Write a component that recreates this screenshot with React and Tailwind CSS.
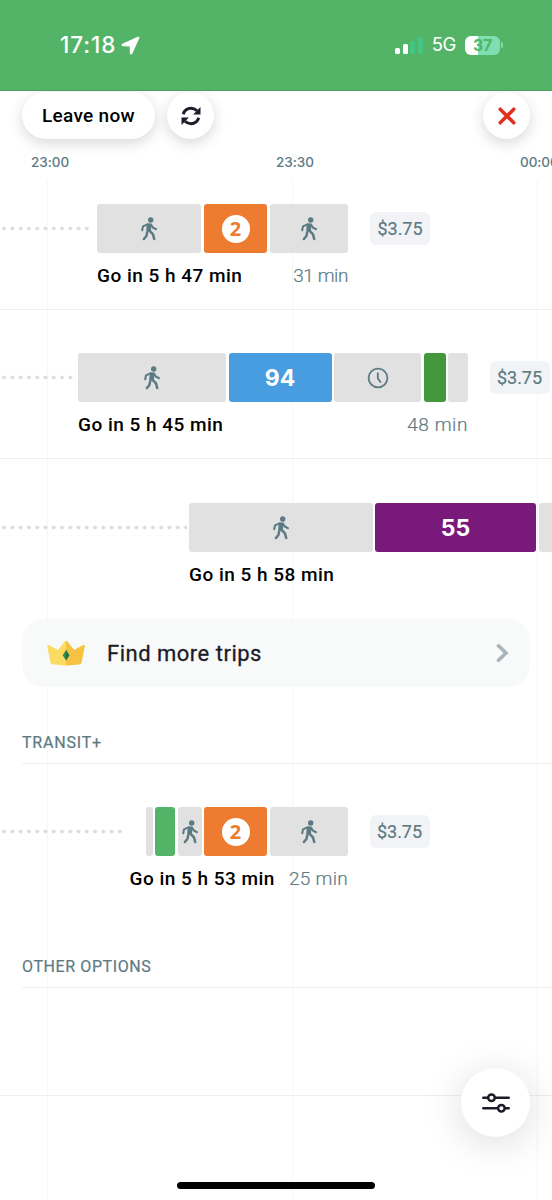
import React from 'react';

const WalkIcon = () => (
    <svg width="16" height="24" viewBox="0 0 16 24" className="shrink-0" fill="none" stroke="#5c7a82" strokeLinecap="round" strokeLinejoin="round">
        <circle cx="9.7" cy="3" r="2.7" fill="#5c7a82" stroke="none" />
        <path d="M6.8 7.3L9.4 7.5L9 14L6.2 13.4Z" fill="#5c7a82" strokeWidth="2" />
        <path d="M6.4 7.4L2 9.4L1.200 13.2" strokeWidth="2.1" />
        <path d="M10 7.6L11.8 10.5L14.900 12.2" strokeWidth="2.1" />
        <path d="M6.2 15.2L5.4 19L2.900 22" strokeWidth="2.5" />
        <path d="M8.6 13.8L12 17.400L13.200 22" strokeWidth="2.5" />
    </svg>
);

const ClockIcon = () => (
    <svg width="22" height="22" viewBox="0 0 22 22" className="shrink-0" fill="none" stroke="#5c7a82" strokeWidth="1.8" strokeLinecap="round">
        <circle cx="11" cy="11" r="9.4" />
        <path d="M10.8 6.2V11.4L13.4 15" />
    </svg>
);

const RefreshIcon = () => (
    <svg width="20" height="20" viewBox="0 0 20 20" fill="none" stroke="#1c1c28" strokeWidth="2.9">
        <path d="M2.2 8.2C3.4 4.6 6.4 2.3 10 2.3C12.4 2.3 14.4 3.2 16 4.8" />
        <path d="M17.8 11.8C16.6 15.4 13.6 17.7 10 17.7C7.6 17.7 5.6 16.8 4 15.2" />
        <path d="M19.5 1V8.4H12.2Z" fill="#1c1c28" stroke="none" />
        <path d="M.5 19V11.6H7.8Z" fill="#1c1c28" stroke="none" />
    </svg>
);

const CrownIcon = () => (
    <svg width="38" height="26" viewBox="0 0 38 26">
        <path d="M1.5 5L11 10L17.600 1.800Q19 .4 20.400 1.800L27 10L36.500 5Q38 5 37.700 6.500L34.500 22.500Q34.200 24 32.500 24.300Q19 26.500 5.500 24.300Q3.800 24 3.500 22.500L.3 6.500Q0 5 1.500 5Z" fill="#fbdb62" />
        <path d="M19 .8Q19.700.8 20.400 1.800L27 10L36.500 5Q38 5 37.700 6.500L34.500 22.500Q34.200 24 32.500 24.300Q26 25.400 19 25.400Z" fill="#f5c244" />
        <path d="M19 10L22.300 15.300L19 20.600L15.700 15.300Z" fill="#2f8f4b" />
        <path d="M19 10L22.300 15.300L19 20.600Z" fill="#23733c" />
    </svg>
);

const StatusBar = () => (
    <header className="relative z-10 flex h-[91px] items-center border-b border-[#4aa15f] bg-[#53b467] pl-[60px] pr-[49px] text-white">
        <span className="w-[57px] font-['Inter'] text-[22.500px] font-medium tracking-[0.900px]">17:18</span>
        <svg width="19" height="19" viewBox="0 0 19 19" className="ml-[4px]">
            <path d="M17 1.400L1.600 8.200Q.6 9 1.600 9.600L9.200 9.800L9.500 17.200Q9.900 18.400 10.800 17.300L17.700 2.100Q18 1.100 17 1.400Z" fill="white" stroke="white" strokeWidth="1.200" strokeLinejoin="round" />
        </svg>
        <div className="ml-auto flex items-end gap-[2.500px]">
            <span className="h-[6px] w-[5px] rounded-[1.500px] bg-white"></span>
            <span className="h-[10px] w-[5px] rounded-[1.500px] bg-white"></span>
            <span className="h-[13px] w-[5px] rounded-[1.500px] bg-[#46c482]"></span>
            <span className="h-[17px] w-[5px] rounded-[1.500px] bg-[#46c482]"></span>
        </div>
        <span className="ml-[9px] font-['Inter'] text-[18.500px] tracking-[-0.400px]">5G</span>
        <div className="ml-[9px] flex h-[19px] w-[35px] items-center justify-center rounded-[6px] bg-[linear-gradient(90deg,#fff_37%,#7fdfb0_37%)] font-['Inter'] text-[16px] font-bold tracking-[-0.400px] text-[#53b467]">37</div>
        <span className="ml-px h-[6px] w-[2px] rounded-r-full bg-[#7fdfb0]"></span>
    </header>
);

const Price = ({ className }) => (
    <div className={`flex h-[33px] w-[60px] shrink-0 items-center justify-center rounded-[6px] bg-[#f1f3f6] text-[18px] tracking-[-0.050px] text-[#5c7a82] [-webkit-text-stroke:0.2px_#5c7a82] ${className}`}>$3.75</div>
);

const Seg = ({ className, children }) => (
    <div className={`flex h-[49px] shrink-0 items-center justify-center rounded-[3px] ${className}`}>{children}</div>
);

const Line2 = () => (
    <div className="flex h-[28px] w-[28px] items-center justify-center rounded-full bg-white font-['Open_Sans'] text-[20px] font-bold leading-none text-[#ed7b30]">2</div>
);

const Dots = ({ className }) => (
    <div className={`h-[5px] shrink-0 bg-[radial-gradient(circle,#dcdcdc_1.700px,transparent_2.200px)] bg-[length:8.270px_5px] ${className}`}></div>
);

const Leave = ({ children }) => (
    <span className="whitespace-nowrap text-[19px] font-medium tracking-[0.480px] text-black">{children}</span>
);

const Duration = ({ className = 'tracking-[0.600px]', children }) => (
    <span className={`whitespace-nowrap text-[19px] font-light text-[#5c7a82] [-webkit-text-stroke:0.2px_#5c7a82] ${className}`}>{children}</span>
);

export default function App() {
    return (
        <div className="relative h-[1200px] w-[552px] overflow-hidden bg-white font-['Roboto',sans-serif]">
            {/* half-hour guides behind the trips */}
            <div className="absolute left-[47px] top-[180px] h-[1020px] w-[491px] border-x border-[#f6f6f6]">
                <div className="ml-[244px] h-full w-px bg-[#f6f6f6]"></div>
            </div>

            <StatusBar />

            <div className="relative flex h-[55px] items-start px-[22px] pt-[1px]">
                <button className="flex h-[47px] w-[133px] items-center justify-center rounded-full bg-white pt-px text-[19px] font-medium tracking-[0.300px] text-black shadow-[0_4px_14px_rgba(0,0,0,0.16)]">Leave now</button>
                <button className="ml-[12px] flex h-[47px] w-[47px] items-center justify-center rounded-full bg-white shadow-[0_4px_14px_rgba(0,0,0,0.16)]"><RefreshIcon /></button>
                <button className="ml-auto flex h-[47px] w-[47px] items-center justify-center rounded-full bg-white shadow-[0_4px_14px_rgba(0,0,0,0.16)]">
                    <svg width="18" height="18" viewBox="0 0 18 18" stroke="#e1301f" strokeWidth="3.500" strokeLinecap="round">
                        <path d="M2.200 2.200L15.800 15.800M15.800 2.200L2.200 15.800" />
                    </svg>
                </button>
            </div>

            <div className="relative flex h-[34px] pl-[31px] pt-[6px] font-['Inter'] text-[13.500px] font-medium leading-[20px] tracking-[-0.050px] text-[#5c7a82]">
                <span className="w-[245px] shrink-0">23:00</span>
                <span className="w-[244px] shrink-0">23:30</span>
                <span className="shrink-0">00:00</span>
            </div>

            <section className="relative h-[130px] border-b border-[#efefef] pt-[24px]">
                <div className="flex items-center gap-[3px]">
                    <Dots className="mr-[3px] w-[91px]" />
                    <Seg className="w-[104px] bg-[#e1e1e1]"><WalkIcon /></Seg>
                    <Seg className="w-[63px] bg-[#ed7b30]"><Line2 /></Seg>
                    <Seg className="w-[78px] bg-[#e1e1e1]"><WalkIcon /></Seg>
                    <Price className="ml-[19px]" />
                </div>
                <div className="mt-[9px] flex w-[348px] justify-between pl-[97px]">
                    <Leave>Go in 5 h 47 min</Leave>
                    <Duration className="tracking-[-0.400px]">31 min</Duration>
                </div>
            </section>

            <section className="relative h-[149px] border-b border-[#efefef] pt-[43px]">
                <div className="flex items-center gap-[2.500px]">
                    <Dots className="mr-[1px] w-[74.500px]" />
                    <Seg className="w-[148px] bg-[#e1e1e1]"><WalkIcon /></Seg>
                    <Seg className="w-[103px] bg-[#489de0] pt-[2px] font-['Inter'] text-[23px] font-bold text-white">94</Seg>
                    <Seg className="w-[87px] bg-[#e1e1e1]"><ClockIcon /></Seg>
                    <Seg className="w-[22px] bg-[#43983b]" />
                    <Seg className="w-[19.500px] bg-[#e1e1e1]" />
                    <Price className="ml-[19.500px]" />
                </div>
                <div className="mt-[9px] flex w-[468px] justify-between pl-[78px]">
                    <Leave>Go in 5 h 45 min</Leave>
                    <Duration>48 min</Duration>
                </div>
            </section>

            <section className="relative h-[160px] pt-[44px]">
                <div className="flex items-center gap-[2.500px]">
                    <Dots className="w-[186.500px]" />
                    <Seg className="w-[183.500px] bg-[#e1e1e1]"><WalkIcon /></Seg>
                    <Seg className="w-[161px] bg-[#791a7b] pt-[2px] font-['Inter'] text-[23px] font-bold text-white">55</Seg>
                    <Seg className="w-[40px] bg-[#e1e1e1]" />
                </div>
                <div className="mt-[9px] pl-[189px]">
                    <Leave>Go in 5 h 58 min</Leave>
                </div>
            </section>

            <div className="relative mx-[22px] flex h-[68px] items-center rounded-[22px] bg-[#f8f9f9] pl-[25px] pr-[21px]">
                <CrownIcon />
                <span className="ml-[22px] pt-px text-[22px] tracking-[0.500px] text-[#1c1c28] [-webkit-text-stroke:0.3px_#1c1c28]">Find more trips</span>
                <svg width="13" height="20" viewBox="0 0 13 20" className="ml-auto" fill="none" stroke="#a9b4bb" strokeWidth="3.600" strokeLinecap="round">
                    <path d="M2.500 2.800L10 10L2.500 17.200" />
                </svg>
            </div>

            <h2 className="relative ml-[22px] flex h-[77px] items-end border-b border-[#efefef] pb-[8px] text-[16px] tracking-[0.800px] text-[#5c7a82] [-webkit-text-stroke:0.2px_#5c7a82]">TRANSIT+</h2>

            <section className="relative h-[147px] pt-[43px]">
                <div className="flex items-center gap-[2.500px]">
                    <Dots className="mr-[19px] w-[124px]" />
                    <Seg className="w-[7px] bg-[#e1e1e1]" />
                    <Seg className="w-[20px] bg-[#53b467]" />
                    <Seg className="w-[24px] bg-[#e1e1e1]"><WalkIcon /></Seg>
                    <Seg className="w-[63px] bg-[#ed7b30]"><Line2 /></Seg>
                    <Seg className="w-[78.500px] bg-[#e1e1e1]"><WalkIcon /></Seg>
                    <Price className="ml-[19px]" />
                </div>
                <div className="mt-[9px] flex w-[348px] justify-between pl-[129.500px]">
                    <Leave>Go in 5 h 53 min</Leave>
                    <Duration className="tracking-[0.300px]">25 min</Duration>
                </div>
            </section>

            <h2 className="relative ml-[22px] flex h-[77px] items-end border-b border-[#efefef] pb-[8px] text-[16px] tracking-[0.600px] text-[#5c7a82] [-webkit-text-stroke:0.2px_#5c7a82]">OTHER OPTIONS</h2>
            <div className="relative h-[108px] border-b border-[#efefef]"></div>

            <button className="absolute left-[461px] top-[1068px] flex h-[69px] w-[69px] items-center justify-center rounded-full bg-white shadow-[0_6px_40px_rgba(0,0,0,0.14)]">
                <svg width="28" height="20" viewBox="0 0 28 20" fill="white" stroke="#1c1c28" strokeWidth="2.500" strokeLinecap="round">
                    <path d="M1.300 4.700H26.700M1.300 15.300H26.700" />
                    <circle cx="9.500" cy="4.700" r="3.300" />
                    <circle cx="19.400" cy="15.300" r="3.300" />
                </svg>
            </button>
            <div className="absolute bottom-[11px] left-[177px] h-[7px] w-[198px] rounded-full bg-black"></div>
        </div>
    );
}
